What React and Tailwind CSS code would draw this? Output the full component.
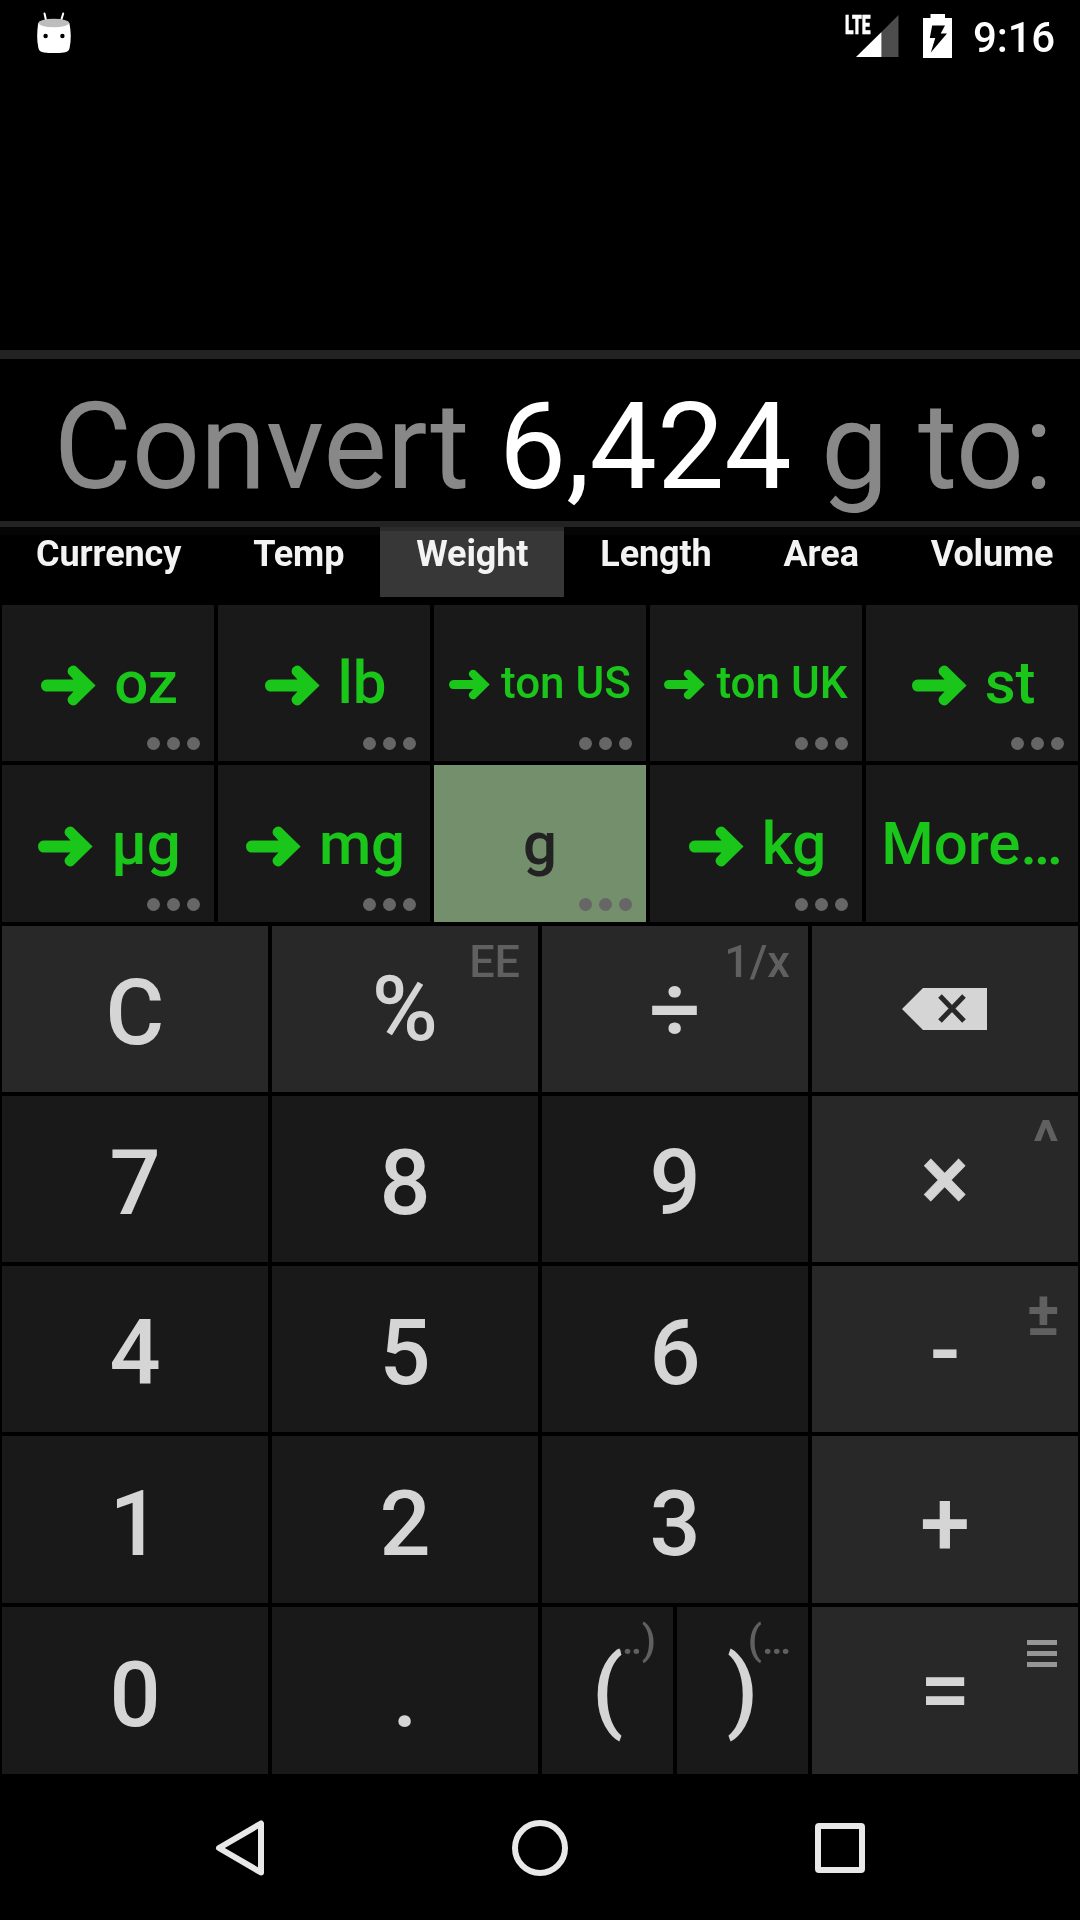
import React from "react";

const FONT = "font-['Roboto',sans-serif]";

function StatusBar() {
  return (
    <header className="flex h-[72px] shrink-0 items-start justify-between pl-[36px] pr-[25px]">
      <svg className="mt-[11px] h-[43px] w-[36px]" viewBox="0 0 36 43">
        <path d="M8.5 2.5 L10.2 10 M27.2 2.5 L25 10" stroke="#fff" strokeWidth="2" strokeLinecap="round" />
        <path d="M2.2 12 C1 20 0.6 29 2.4 37 C3 40 5 41 8 41.4 C14 42.2 22 42.2 28 41.4 C31 41 33 40 33.6 37 C35.4 29 35 20 33.4 12 Z" fill="#fff" />
        <ellipse cx="17.8" cy="12" rx="15.4" ry="4.2" fill="#bdbdbd" />
        <circle cx="9.6" cy="25" r="2.2" fill="#000" />
        <circle cx="26.4" cy="25" r="2.2" fill="#000" />
      </svg>
      <div className="flex items-start">
        <div className="relative h-[72px] w-[54px]">
          <svg className="absolute left-[11px] top-[15px] h-[42px] w-[43px]" viewBox="0 0 43 42">
            <path d="M25.5 17 L42.5 0 V42 H25.5 Z" fill="#4d4d4d" />
            <path d="M0 42 L25.5 17 V42 Z" fill="#fff" />
          </svg>
          <span className="absolute left-0 top-[12px] origin-left scale-x-[0.6] text-[26px] leading-[26px] font-black text-white [-webkit-text-stroke:0.5px_white]">
            LTE
          </span>
        </div>
        <svg className="ml-[24px] mt-[14px] h-[44px] w-[29px]" viewBox="0 0 29 44">
          <path d="M7.5 0 H22 V4 H29 V44 H0 V4 H7.5 Z" fill="#fff" />
          <path d="M9.2 11.5 H22 L17.7 19.5 H24 L7.8 38.5 L12.3 24 H6.8 Z" fill="#000" />
        </svg>
        <span className="ml-[21px] mt-[14px] text-[42px] leading-[48px] font-medium tracking-[-0.2px] text-white">9:16</span>
      </div>
    </header>
  );
}

const TABS = ["Currency", "Temp", "Weight", "Length", "Area", "Volume"];

function Tabs() {
  return (
    <nav className="relative flex h-[78px] shrink-0 items-start overflow-hidden">
      {TABS.map((t) => (
        <div
          key={t}
          className={
            "h-[70px] shrink-0 px-[36px] pt-[6px] text-[36px] leading-[42px] font-bold tracking-[-0.13px] text-[#f3f3f3] " +
            (t === "Weight" ? "bg-[#373737]" : "")
          }
        >
          {t}
        </div>
      ))}
      <div className="absolute inset-x-0 top-0 h-[8px] bg-[#050505] mix-blend-lighten" />
      <div className="absolute left-[380px] top-0 h-[4px] w-[184px] bg-[#2b2b2b]" />
    </nav>
  );
}

function Arrow({ small }) {
  return (
    <svg
      className={small ? "mt-[3px] h-[31px] w-[41px] shrink-0" : "ml-[3px] mt-[5px] h-[41px] w-[55px] shrink-0"}
      viewBox="0 0 55 41"
    >
      <path
        d="M6 14.4 H32.5 L27.4 9 A5.6 5.6 0 0 1 35.2 1.5 L54.6 20.5 L35.2 39.5 A5.6 5.6 0 0 1 27.4 32 L32.5 26.6 H6 C-1.9 26.6 -1.9 14.4 6 14.4 Z"
        fill="#1bc61b"
      />
    </svg>
  );
}

const UNITS = [
  { label: "oz" },
  { label: "lb" },
  { label: "ton US", small: true },
  { label: "ton UK", small: true },
  { label: "st" },
  { label: "µg" },
  { label: "mg" },
  { label: "g", active: true },
  { label: "kg" },
  { label: "More…", more: true },
];

function Unit({ label, small, active, more }) {
  return (
    <div
      className={
        "relative flex items-center justify-center whitespace-nowrap font-medium " +
        (active ? "bg-[#748f6c] text-[#222] " : "bg-[#191919] text-[#1bc61b] ") +
        (small ? "gap-[11px] pb-[1px] text-[44px] leading-[52px]" : "gap-[18px] text-[60px] leading-[70px] tracking-[-0.1px]")
      }
    >
      {!active && !more && <Arrow small={small} />}
      <span>{label}</span>
      {!more && (
        <div className="absolute bottom-[11px] right-[14px] flex gap-[7px]">
          <i className="size-[13px] rounded-full bg-[#666]" />
          <i className="size-[13px] rounded-full bg-[#666]" />
          <i className="size-[13px] rounded-full bg-[#666]" />
        </div>
      )}
    </div>
  );
}

function Key({ children, hint, hintClass = "right-[18px] top-[9px] text-[45px] leading-[53px] text-[#606060]", light, className = "pt-[10px]" }) {
  return (
    <div
      className={
        "relative flex items-center justify-center text-[90px] leading-[106px] font-medium text-[#d5d5d5] " +
        (light ? "bg-[#282828] " : "bg-[#191919] ")
      }
    >
      {hint && <span className={"absolute " + hintClass}>{hint}</span>}
      <span className={"relative " + className}>{children}</span>
    </div>
  );
}

function Backspace() {
  return (
    <svg className="mr-[1px] h-[42px] w-[85px]" viewBox="0 0 85 42">
      <path d="M0 21 L21 0 H85 V42 H21 Z" fill="#d5d5d5" />
      <path d="M38 8 L62 33 M62 8 L38 33" stroke="#282828" strokeWidth="5" />
    </svg>
  );
}

function Keypad() {
  return (
    <main className="grid shrink-0 grid-cols-4 grid-rows-[166px_166px_166px_167px_167px] gap-[4px] px-[2px] pt-[4px]">
      <Key light>C</Key>
      <Key light hint="EE" className="pt-[2px]">%</Key>
      <Key light hint="1/x" className="pt-[3px]">÷</Key>
      <Key light className="flex"><Backspace /></Key>
      <Key>7</Key>
      <Key>8</Key>
      <Key>9</Key>
      <Key light hint="^" hintClass="right-[19px] top-[11px] text-[60px] leading-[70px] font-bold text-[#606060]" className="pt-[2px] [-webkit-text-stroke:0.8px_#d5d5d5]">×</Key>
      <Key>4</Key>
      <Key>5</Key>
      <Key>6</Key>
      <Key light hint="±" hintClass="right-[18px] top-[12px] text-[62px] leading-[72px] font-bold text-[#606060]" className="pt-[3px]">-</Key>
      <Key>1</Key>
      <Key>2</Key>
      <Key>3</Key>
      <Key light>+</Key>
      <Key>0</Key>
      <Key>.</Key>
      <div className="grid grid-cols-2 gap-[4px]">
        <Key hint="…)" hintClass="right-[17px] top-[9px] text-[41px] leading-[48px] text-[#606060]" className="pt-[1px]">(</Key>
        <Key hint="(…" hintClass="right-[17px] top-[9px] text-[41px] leading-[48px] text-[#606060]" className="pt-[1px]">)</Key>
      </div>
      <Key
        light
        hintClass="right-[21px] top-[33px]"
        className="pt-[1px]"
        hint={
          <span className="flex flex-col gap-[6px]">
            <i className="h-[5px] w-[30px] bg-[#969696]" />
            <i className="h-[5px] w-[30px] bg-[#969696]" />
            <i className="h-[5px] w-[30px] bg-[#969696]" />
          </span>
        }
      >
        =
      </Key>
    </main>
  );
}

function NavBar() {
  return (
    <footer className="flex grow items-center justify-between px-[215px] pt-[2px]">
      <svg className="h-[58px] w-[50px]" viewBox="0 0 50 58" fill="none" stroke="#e8e8e8" strokeWidth="6" strokeLinejoin="round">
        <path d="M46 4.5 V53.5 L4 29 Z" />
      </svg>
      <span className="size-[56px] rounded-full border-[6px] border-[#e8e8e8]" />
      <span className="size-[50px] rounded-[4px] border-[6px] border-[#e8e8e8]" />
    </footer>
  );
}

export default function App() {
  return (
    <div className={"flex h-[1920px] w-[1080px] flex-col overflow-hidden bg-black " + FONT}>
      <StatusBar />
      <div className="h-[278px] shrink-0" />
      <section className="flex h-[177px] shrink-0 items-center justify-end whitespace-pre border-t-[9px] border-b-[6px] border-[#232323] pr-[27px] pt-[14px] text-[120px] leading-[140px] tracking-[-0.16px] text-[#888]">
        Convert <span className="text-white">6,424</span> g to:
      </section>
      <Tabs />
      <section className="grid shrink-0 grid-cols-5 grid-rows-[156px_157px] gap-[4px] px-[2px]">
        {UNITS.map((u) => (
          <Unit key={u.label} {...u} />
        ))}
      </section>
      <Keypad />
      <NavBar />
    </div>
  );
}
